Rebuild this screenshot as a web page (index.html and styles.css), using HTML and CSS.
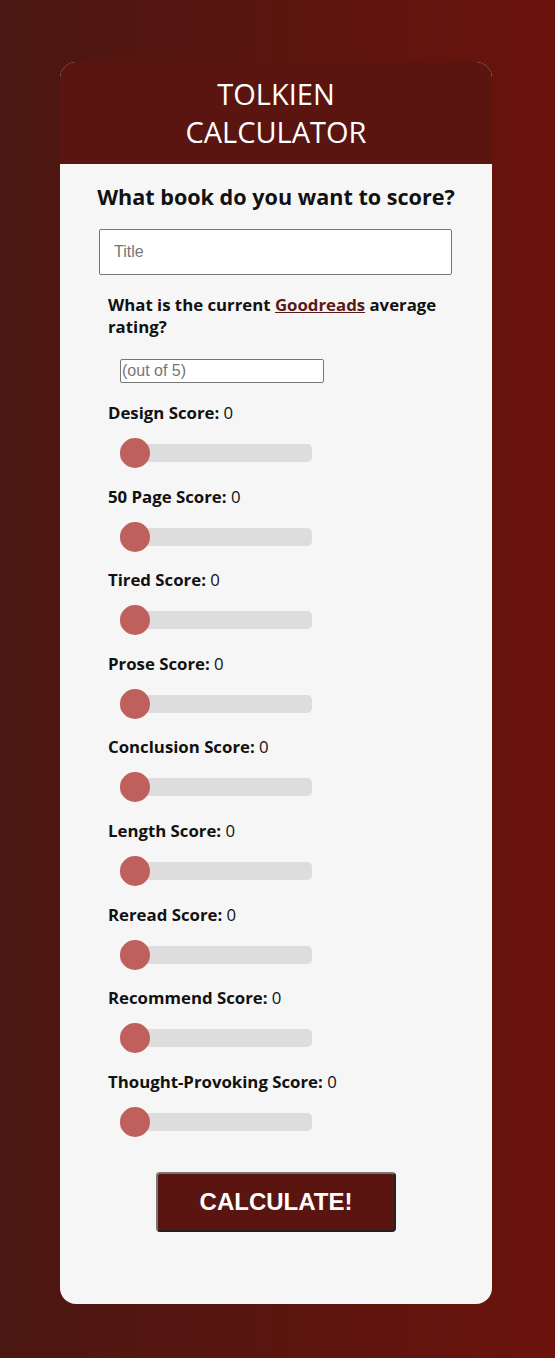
FILE: index.html
```html
<!DOCTYPE html>
<html>
<head>
<meta charset="utf-8">
<link rel="stylesheet" href="styles.css">
</head>
<body>
<div class="card">
  <div class="header">TOLKIEN<br>CALCULATOR</div>
  <div class="content">
    <h2 class="heading">What book do you want to score?</h2>
    <input class="title-input" type="text" placeholder="Title">
    <div class="fields">
      <p class="question">What is the current <a href="#" class="link">Goodreads</a> average rating?</p>
      <input class="rating-input" type="text" placeholder="(out of 5)">
      <div class="item"><div class="label"><b>Design Score:</b> 0</div><input class="range" type="range" min="0" max="10" value="0"></div>
      <div class="item"><div class="label"><b>50 Page Score:</b> 0</div><input class="range" type="range" min="0" max="10" value="0"></div>
      <div class="item"><div class="label"><b>Tired Score:</b> 0</div><input class="range" type="range" min="0" max="10" value="0"></div>
      <div class="item"><div class="label"><b>Prose Score:</b> 0</div><input class="range" type="range" min="0" max="10" value="0"></div>
      <div class="item"><div class="label"><b>Conclusion Score:</b> 0</div><input class="range" type="range" min="0" max="10" value="0"></div>
      <div class="item"><div class="label"><b>Length Score:</b> 0</div><input class="range" type="range" min="0" max="10" value="0"></div>
      <div class="item"><div class="label"><b>Reread Score:</b> 0</div><input class="range" type="range" min="0" max="10" value="0"></div>
      <div class="item"><div class="label"><b>Recommend Score:</b> 0</div><input class="range" type="range" min="0" max="10" value="0"></div>
      <div class="item"><div class="label"><b>Thought-Provoking Score:</b> 0</div><input class="range" type="range" min="0" max="10" value="0"></div>
    </div>
    <div class="btn-row"><button class="calc">CALCULATE!</button></div>
  </div>
</div>
</body>
</html>
```

FILE: styles.css
```css
html, body {
  margin: 0;
  padding: 0;
}
body {
  min-height: 1358px;
  background: linear-gradient(to right, #4b1712, #6a130c);
  font-family: "Open Sans", "DejaVu Sans", sans-serif;
  padding-top: 62px;
  box-sizing: border-box;
}
.card {
  width: 432px;
  margin: 0 0 0 60px;
  background: #f6f6f6;
  border-radius: 16px;
  overflow: hidden;
}
.header {
  background: #5a1511;
  color: #ffffff;
  text-align: center;
  font-size: 29px;
  line-height: 38px;
  padding: 13px 0;
}
.content {
  padding: 19px 0 72px;
  display: flex;
  flex-direction: column;
}
.heading {
  margin: 0;
  text-align: center;
  font-size: 21.6px;
  line-height: 28px;
  font-weight: 700;
  color: #111;
}
.title-input {
  margin: 18px 0 0 39px;
  width: 353px;
  height: 46px;
  box-sizing: border-box;
  border: 1px solid #767676;
  border-radius: 2px;
  background: #fff;
  padding: 0 14px;
  font-family: "Liberation Sans", Arial, sans-serif;
  font-size: 16px;
}
.title-input::placeholder,
.rating-input::placeholder {
  color: #767676;
}
.fields {
  padding-left: 48px;
  padding-right: 40px;
  display: flex;
  flex-direction: column;
  align-items: flex-start;
}
.question {
  margin: 19px 0 0;
  font-size: 16.8px;
  line-height: 22px;
  font-weight: 700;
  color: #111;
}
.link {
  color: #5a1a1a;
  text-decoration: underline;
}
.rating-input {
  margin: 21px 0 0 12px;
  width: 204px;
  height: 24px;
  box-sizing: border-box;
  border: 1px solid #767676;
  border-radius: 2px;
  background: #fff;
  padding: 0 1px;
  font-family: "Liberation Sans", Arial, sans-serif;
  font-size: 16px;
}
.item {
  display: flex;
  flex-direction: column;
  align-items: flex-start;
  margin-top: 17.6px;
}
.item:first-of-type {
  margin-top: 19px;
}
.label {
  font-size: 16.8px;
  line-height: 22px;
  color: #111;
}
.label b {
  font-weight: 700;
}
.range {
  -webkit-appearance: none;
  appearance: none;
  margin: 14px 0 0 12px;
  width: 192px;
  height: 30px;
  background: transparent;
  padding: 0;
}
.range::-webkit-slider-runnable-track {
  height: 18px;
  background: #dddddd;
  border-radius: 5px;
}
.range::-webkit-slider-thumb {
  -webkit-appearance: none;
  appearance: none;
  width: 30px;
  height: 30px;
  border-radius: 50%;
  background: #c0605c;
  margin-top: -6px;
  border: none;
}
.btn-row {
  display: flex;
  justify-content: center;
  margin-top: 35px;
}
.calc {
  width: 240px;
  height: 60px;
  background: #5a1511;
  color: #fff;
  font-family: "Liberation Sans", Arial, sans-serif;
  font-weight: 700;
  font-size: 24px;
  border: 2px solid;
  border-color: #767676 #222 #222 #767676;
  border-radius: 4px;
  cursor: pointer;
}
```
